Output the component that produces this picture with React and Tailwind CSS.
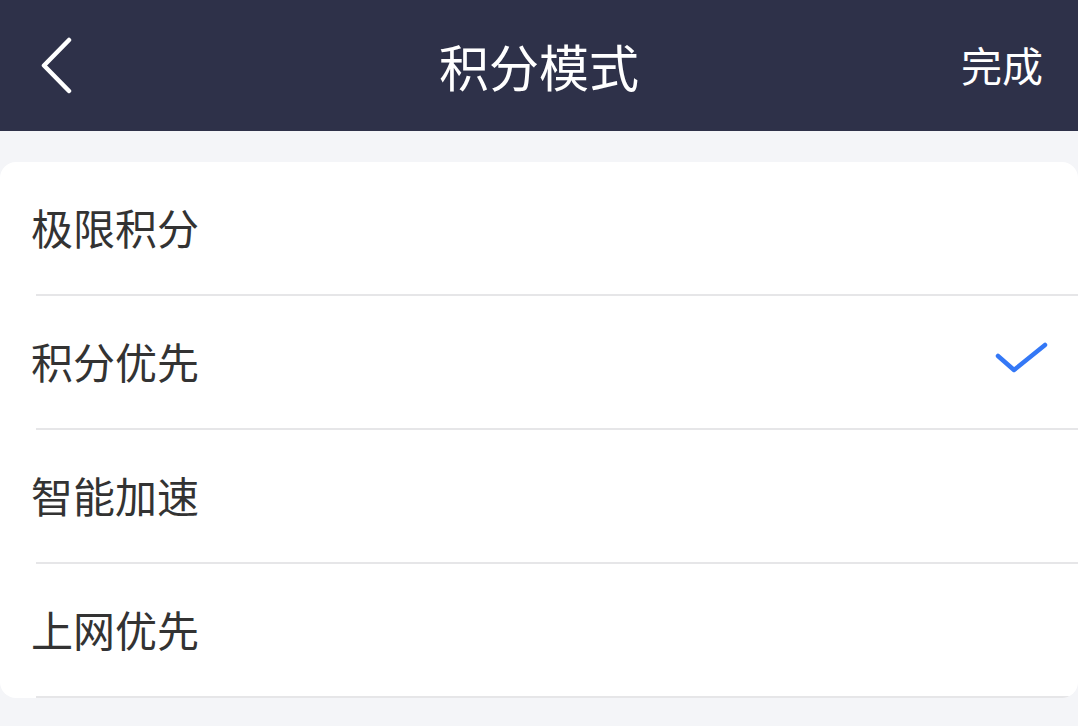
const modes = ['极限积分', '积分优先', '智能加速', '上网优先'];

export default function App() {
  const selected = '积分优先';
  return (
    <div
      className="w-[1078px] h-[726px] bg-[#f4f5f8] overflow-hidden"
      style={{ fontFamily: '"Noto Sans CJK SC", "Noto Sans", sans-serif' }}
    >
      {/* header */}
      <div className="h-[131px] bg-[#2e3149] flex items-center justify-between">
        <button className="w-[160px] h-full flex items-center pl-[40px]">
          <svg width="34" height="58" viewBox="0 0 34 58" fill="none">
            <path d="M29 3 L4 28.5 L29 54" stroke="#fff" strokeWidth="4.5" strokeLinecap="round" strokeLinejoin="round" />
          </svg>
        </button>
        <h1 className="text-[50px] leading-none text-white font-normal -mt-[2px]">积分模式</h1>
        <button className="w-[160px] h-full flex items-center justify-end pr-[35px] text-[41px] text-white leading-none whitespace-nowrap -mt-[2px]">
          完成
        </button>
      </div>

      {/* list */}
      <div className="mt-[31px] bg-white rounded-[16px] overflow-hidden">
        {modes.map((m) => (
          <div key={m} className="h-[134px] pl-[36px] flex">
            <div className="flex-1 flex items-center justify-between border-b-2 border-[#e6e6e8]">
              <span className="text-[42px] text-[#333333] leading-none -ml-[5px] -mt-[2px]">{m}</span>
              {m === selected && (
                <svg className="mr-[28px]" width="56" height="40" viewBox="0 0 56 40" fill="none">
                  <path d="M4 14 L20 28 L51 3" stroke="#3478f6" strokeWidth="4.5" strokeLinecap="round" strokeLinejoin="round" />
                </svg>
              )}
            </div>
          </div>
        ))}
      </div>
    </div>
  );
}
